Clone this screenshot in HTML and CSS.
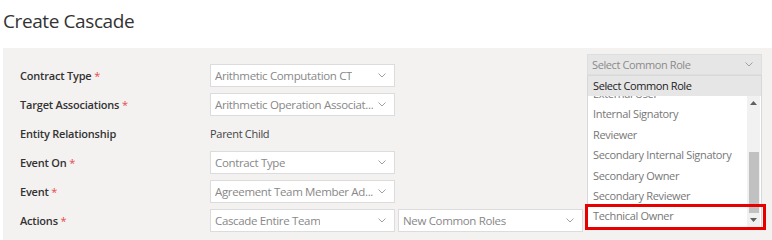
FILE: index.html
```html
<!DOCTYPE html>
<html lang="en">
<head>
    <meta charset="UTF-8">
    <title>Create Cascade</title>
    <link rel="stylesheet" href="styles.css">
</head>
<body>
    <h1 class="page-title">Create Cascade</h1>

    <div class="panel">
        <div class="form">
            <div class="row">
                <label class="field-label">Contract Type <span class="req">*</span></label>
                <div class="select"><span class="select-text">Arithmetic Computation CT</span><svg class="chev" width="8" height="5" viewBox="0 0 8 5"><polyline points="0.5,0.5 4,4 7.5,0.5"/></svg></div>
            </div>
            <div class="row">
                <label class="field-label">Target Associations <span class="req">*</span></label>
                <div class="select"><span class="select-text">Arithmetic Operation Associat...</span><svg class="chev" width="8" height="5" viewBox="0 0 8 5"><polyline points="0.5,0.5 4,4 7.5,0.5"/></svg></div>
            </div>
            <div class="row">
                <label class="field-label">Entity Relationship</label>
                <span class="plain-value">Parent Child</span>
            </div>
            <div class="row">
                <label class="field-label">Event On <span class="req">*</span></label>
                <div class="select"><span class="select-text">Contract Type</span><svg class="chev" width="8" height="5" viewBox="0 0 8 5"><polyline points="0.5,0.5 4,4 7.5,0.5"/></svg></div>
            </div>
            <div class="row">
                <label class="field-label">Event <span class="req">*</span></label>
                <div class="select"><span class="select-text">Agreement Team Member Ad...</span><svg class="chev" width="8" height="5" viewBox="0 0 8 5"><polyline points="0.5,0.5 4,4 7.5,0.5"/></svg></div>
            </div>
            <div class="row">
                <label class="field-label">Actions <span class="req">*</span></label>
                <div class="select"><span class="select-text">Cascade Entire Team</span><svg class="chev" width="8" height="5" viewBox="0 0 8 5"><polyline points="0.5,0.5 4,4 7.5,0.5"/></svg></div>
                <div class="select select-second"><span class="select-text">New Common Roles</span><svg class="chev" width="8" height="5" viewBox="0 0 8 5"><polyline points="0.5,0.5 4,4 7.5,0.5"/></svg></div>
            </div>
        </div>

        <div class="side">
            <div class="select select-role"><span class="select-text">Select Common Role</span><svg class="chev" width="8" height="5" viewBox="0 0 8 5"><polyline points="0.5,0.5 4,4 7.5,0.5"/></svg></div>

            <div class="role-list">
                <div class="role-header">Select Common Role</div>
                <div class="role-viewport">
                    <ul class="role-items">
                        <li>External User</li>
                        <li>Internal Signatory</li>
                        <li>Reviewer</li>
                        <li>Secondary Internal Signatory</li>
                        <li>Secondary Owner</li>
                        <li>Secondary Reviewer</li>
                        <li>Technical Owner</li>
                    </ul>
                    <div class="scrollbar">
                        <svg class="sb-arrow sb-up" width="7" height="4" viewBox="0 0 7 4"><polygon points="0,4 3.5,0 7,4"/></svg>
                        <div class="sb-thumb"></div>
                        <svg class="sb-arrow sb-down" width="7" height="4" viewBox="0 0 7 4"><polygon points="0,0 3.5,4 7,0"/></svg>
                    </div>
                </div>
            </div>
        </div>

        <div class="highlight"></div>
    </div>
</body>
</html>
```

FILE: styles.css
```css
body {
    margin: 0;
    font-family: "Open Sans", "Noto Sans", sans-serif;
    color: #333;
    background: #fff;
    width: 772px;
    height: 240px;
    overflow: hidden;
}

.page-title {
    margin: 0;
    padding: 8px 0 0 3px;
    height: 40px;
    font-size: 19px;
    line-height: 26px;
    font-weight: normal;
    color: #333;
    letter-spacing: -0.4px;
}

.panel {
    position: relative;
    margin-left: 3px;
    height: 192px;
    background: #f3f2f1;
    display: flex;
    align-items: flex-start;
}

.form {
    padding: 16px 0 0 17px;
    display: flex;
    flex-direction: column;
    gap: 6px;
}

.row {
    display: flex;
    align-items: center;
    height: 23px;
}

.field-label {
    width: 190px;
    font-size: 11px;
    font-weight: 600;
    color: #333;
    letter-spacing: -0.2px;
}

.req {
    color: #e84a4a;
    font-weight: normal;
}

.plain-value {
    font-size: 11px;
    color: #444;
    letter-spacing: -0.3px;
}

.select {
    box-sizing: border-box;
    width: 185px;
    height: 23px;
    background: #fff;
    border: 1px solid #dcdcdc;
    display: flex;
    align-items: center;
    justify-content: space-between;
    padding: 0 8px 0 4px;
}

.select-text {
    font-size: 11.5px;
    color: #888;
    letter-spacing: -0.34px;
    white-space: nowrap;
    overflow: hidden;
}

.chev polyline {
    fill: none;
    stroke: #a0a0a0;
    stroke-width: 1;
}

.select-second {
    margin-left: 3px;
}

.side {
    position: relative;
    margin-left: 4px;
    padding-top: 6px;
    width: 175px;
}

.select-role {
    width: 175px;
    height: 21px;
    background: #e7e6e6;
    border-color: #dedede;
}

.select-role .select-text {
    font-size: 11px;
    letter-spacing: -0.4px;
    color: #8a8a8a;
}

.role-list {
    position: absolute;
    top: 27px;
    left: 0;
    width: 175px;
    box-sizing: border-box;
    background: #fff;
    border: 1px solid #d8d8d8;
}

.role-header {
    height: 20px;
    line-height: 20px;
    background: #e6e6e6;
    padding-left: 5px;
    font-size: 11px;
    letter-spacing: -0.4px;
    color: #222;
}

.role-viewport {
    position: relative;
    height: 132px;
    overflow: hidden;
}

.role-items {
    list-style: none;
    margin: -12px 0 0 0;
    padding: 0;
}

.role-items li {
    height: 20.4px;
    line-height: 20.4px;
    padding-left: 5px;
    font-size: 11px;
    letter-spacing: -0.33px;
    color: #777;
    white-space: nowrap;
}

.scrollbar {
    position: absolute;
    top: 0;
    right: 1px;
    bottom: 0;
    width: 13px;
    background: #f1f1f1;
}

.sb-arrow {
    position: absolute;
    left: 3px;
}

.sb-arrow polygon {
    fill: #606060;
}

.sb-up {
    top: 5px;
}

.sb-down {
    bottom: 6px;
}

.sb-thumb {
    position: absolute;
    left: 2px;
    width: 10px;
    top: 56px;
    height: 61px;
    background: #c1c1c1;
}

.highlight {
    position: absolute;
    left: 582px;
    top: 156px;
    width: 181px;
    height: 26px;
    box-sizing: border-box;
    border: 3px solid #e60000;
}
```
